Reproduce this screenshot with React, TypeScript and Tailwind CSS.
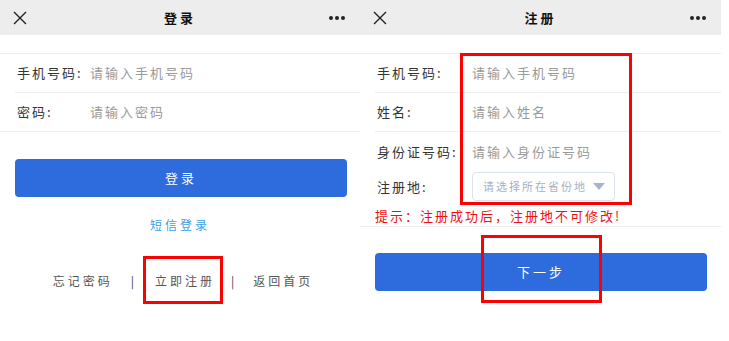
import React from "react";

const font = { fontFamily: '"Noto Sans CJK SC", "Noto Sans", sans-serif' };

function Header({ title }: { title: string }) {
  return (
    <div className="relative flex h-[35px] items-center justify-between bg-[#ededed] px-[13px]">
      <svg width="14" height="14" viewBox="0 0 14 14" className="text-[#222]">
        <path d="M1 1 L13 13 M13 1 L1 13" stroke="currentColor" strokeWidth="1.4" fill="none" />
      </svg>
      <span className="absolute left-1/2 -translate-x-1/2 text-[13px] font-bold tracking-[3px] text-[#111]">
        {title}
      </span>
      <div className="flex gap-[2px] pr-[2px]">
        <span className="h-[4px] w-[4px] rounded-full bg-[#222]" />
        <span className="h-[4px] w-[4px] rounded-full bg-[#222]" />
        <span className="h-[4px] w-[4px] rounded-full bg-[#222]" />
      </div>
    </div>
  );
}

function Row({
  label,
  placeholder,
  labelWidth,
  line,
}: {
  label: string;
  placeholder: string;
  labelWidth: string;
  line?: "full" | "inset" | "none";
}) {
  return (
    <div className={line === "inset" ? "pl-[15px]" : ""}>
      <div
        className={`flex h-[39px] items-center ${line === "inset" ? "" : "pl-[15px]"} ${
          line === "none" ? "" : "border-b border-[#eeeeee]"
        }`}
      >
        <span className={`${labelWidth} shrink-0 pl-[2px] text-[13px] tracking-[2px] text-[#333]`}>{label}</span>
        <span className="text-[13px] tracking-[2px] text-[#9a9a9a]">{placeholder}</span>
      </div>
    </div>
  );
}

function Login() {
  return (
    <div className="w-[360px]">
      <Header title="登录" />
      <div className="mt-[18px] border-t border-[#eeeeee]">
        <Row label="手机号码:" placeholder="请输入手机号码" labelWidth="w-[75px]" line="inset" />
        <Row label="密码:" placeholder="请输入密码" labelWidth="w-[75px]" line="full" />
      </div>
      <button className="mx-[15px] mt-[27px] flex h-[38px] w-[332px] items-center justify-center rounded-[4px] bg-[#2e6bdd] text-[13px] tracking-[3px] text-white">
        登录
      </button>
      <div className="mt-[19px] text-center text-[12px] tracking-[3px] text-[#36a2ea]">短信登录</div>
      <div className="mt-[38px] flex items-center justify-center text-[12px] tracking-[3px] text-[#555]">
        <span className="ml-[6px]">忘记密码</span>
        <span className="mx-[18px] text-[#444]">|</span>
        <span className="relative">
          立即注册
          <span className="absolute left-[-12px] top-[-16px] h-[48px] w-[80px] border-[3px] border-[#ff0000]" />
        </span>
        <span className="mx-[16px] text-[#444]">|</span>
        <span>返回首页</span>
      </div>
    </div>
  );
}

function Register() {
  return (
    <div className="relative w-[361px]">
      <Header title="注册" />
      <div className="mt-[18px] border-t border-[#eeeeee]">
        <Row label="手机号码:" placeholder="请输入手机号码" labelWidth="w-[97px]" line="inset" />
        <Row label="姓名:" placeholder="请输入姓名" labelWidth="w-[97px]" line="inset" />
        <Row label="身份证号码:" placeholder="请输入身份证号码" labelWidth="w-[97px]" line="none" />
        <div className="flex h-[31px] items-center pl-[15px]">
          <span className="w-[97px] shrink-0 pl-[2px] text-[13px] tracking-[2px] text-[#333]">注册地:</span>
          <div className="flex h-[29px] w-[143px] items-center justify-between rounded-[4px] border border-[#dbe2ec] pl-[10px] pr-[9px]">
            <span className="text-[11px] tracking-[2px] text-[#a7b1c2]">请选择所在省份地</span>
            <svg width="12" height="7" viewBox="0 0 12 7">
              <path d="M0 0 L12 0 L6 7 Z" fill="#a9b4c6" />
            </svg>
          </div>
        </div>
        <div className="border-b border-[#eeeeee] pb-[2px] pl-[15px] pt-[5px] text-[13px] leading-[17px] tracking-[2px] text-[#ee1111]">
          提示：注册成功后，注册地不可修改!
        </div>
      </div>
      <span className="absolute left-[100px] top-[53px] h-[152px] w-[172px] border-[3px] border-[#ff0000]" />
      <button className="mx-[15px] mt-[26px] flex h-[38px] w-[332px] items-center justify-center rounded-[4px] bg-[#2e6bdd] text-[13px] tracking-[3px] text-white">
        下一步
      </button>
      <span className="absolute left-[121px] top-[235px] h-[68px] w-[121px] border-[3px] border-[#ff0000]" />
    </div>
  );
}

export default function App() {
  return (
    <div className="flex h-[341px] w-[729px] bg-white" style={font}>
      <Login />
      <Register />
    </div>
  );
}
